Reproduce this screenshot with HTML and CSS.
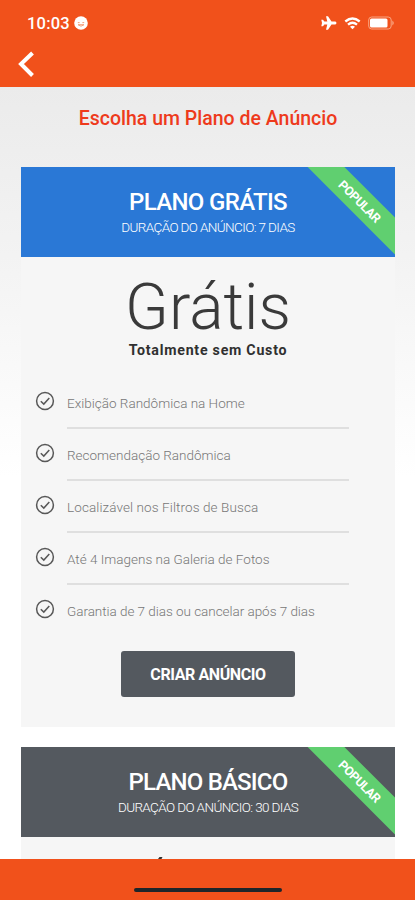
FILE: index.html
```html
<!DOCTYPE html>
<html lang="pt-BR">
<head>
<meta charset="utf-8">
<title>Escolha um Plano de Anúncio</title>
<link rel="stylesheet" href="styles.css">
</head>
<body>
<svg class="defs" width="0" height="0"><symbol id="check" viewBox="0 0 20 20"><circle cx="10" cy="10" r="8.4"/><path d="M5.8 10.2l3 2.9 5.5-6"/></symbol></svg>
<header class="topbar">
  <div class="status">
    <span class="time">10:03</span>
    <svg class="face" viewBox="0 0 14 14"><circle cx="7" cy="7" r="6.8" fill="#fff"/><path d="M3.8 6.6h1.8M8.4 6.6h1.8M4 8.7h6q-3 3-6 0z" fill="none" stroke="#f4a07c" stroke-width="1"/></svg>
    <div class="indicators">
      <svg width="16" height="14" viewBox="0 0 16 14"><path d="M15.500 7c0-.9-.8-1.500-1.800-1.500H10.500L7 .3H5l1.300 5.200H3.400L2 3.800H.3L1 7l-.7 3.200H2l1.400-1.700h2.900L5 13.700h2l3.500-5.200h3.200c1 0 1.800-.6 1.800-1.500z" fill="#fff"/></svg>
      <svg width="17" height="13" viewBox="0 0 17 13" fill="none" stroke="#fff" stroke-width="2.300"><path d="M1.300 4.500q7.200-6 14.400 0M4 7.700q4.500-3.800 9 0"/><path d="M8.500 12.300L6 9.800q2.500-1.900 5 0z" fill="#fff" stroke="none"/></svg>
      <svg width="27" height="14" viewBox="0 0 27 14"><rect x=".7" y="1" width="22.500" height="12" rx="3" fill="none" stroke="#f9a582"/><rect x="2" y="2.500" width="17.500" height="9" rx="1.500" fill="#fff"/><path d="M24.300 4.500q3 2.500 0 5z" fill="#f9a582"/></svg>
    </div>
  </div>
  <svg class="back" viewBox="0 0 18 28"><path d="M14.500 3L3 14l11.500 11.500" fill="none" stroke="#fff" stroke-width="4"/></svg>
</header>
<main class="content">
  <h1 class="heading">Escolha um Plano de Anúncio</h1>
  <section class="card">
    <div class="plan plan-blue">
      <h2>PLANO GRÁTIS</h2>
      <p class="duration">DURAÇÃO DO ANÚNCIO: 7 DIAS</p>
      <span class="ribbon">POPULAR</span>
    </div>
    <div class="price">Grátis</div>
    <p class="note">Totalmente sem Custo</p>
    <ul class="features">
      <li><svg><use href="#check"/></svg><span>Exibição Randômica na Home</span></li>
      <li><svg><use href="#check"/></svg><span>Recomendação Randômica</span></li>
      <li><svg><use href="#check"/></svg><span class="wide">Localizável nos Filtros de Busca</span></li>
      <li><svg><use href="#check"/></svg><span>Até 4 Imagens na Galeria de Fotos</span></li>
      <li><svg><use href="#check"/></svg><span class="tight">Garantia de 7 dias ou cancelar após 7 dias</span></li>
    </ul>
    <button class="create">CRIAR ANÚNCIO</button>
  </section>
  <section class="card card-next">
    <div class="plan plan-gray">
      <h2 class="basic">PLANO BÁSICO</h2>
      <p class="duration">DURAÇÃO DO ANÚNCIO: 30 DIAS</p>
      <span class="ribbon">POPULAR</span>
    </div>
    <svg class="peek" viewBox="0 0 6 3"><path d="M1 3l1.500-2h3L4.500 3z" fill="#333"/></svg>
  </section>
</main>
<footer class="bottombar"><div class="home"></div></footer>
</body>
</html>
```
FILE: styles.css
```css
* { box-sizing: border-box; margin: 0; padding: 0; }
body {
  width: 415px; height: 900px; overflow: hidden;
  display: flex; flex-direction: column;
  font-family: Roboto, "Liberation Sans", sans-serif;
  background: #fff;
}
.defs { display: block; position: absolute; }
.topbar { height: 86.500px; flex: none; background: #f1511b; padding: 13px 20px 0 18px; }
.status { display: flex; align-items: center; height: 20px; padding-left: 9px; }
.time { color: #fff; font-size: 16.500px; font-weight: 500; letter-spacing: .2px; width: 47px; white-space: nowrap; }
.face { width: 14px; height: 14px; }
.indicators { margin-left: auto; display: flex; align-items: center; gap: 7px; }
.back { display: block; width: 18px; height: 28px; margin-top: 17px; }
.content {
  flex: 1; min-height: 0; overflow: hidden; padding: 0 20px 0 21px;
  background: linear-gradient(#ebebeb 0, #f2f2f2 150px, #fff 390px);
}
.heading {
  height: 80.500px; padding-top: 20px; text-align: center; white-space: nowrap;
  font-size: 19.500px; line-height: 23px; font-weight: 500; color: #ee3a1c;
}
.card { height: 560px; background: #f6f6f6; text-align: center; }
.card-next { margin-top: 20px; }
.plan { height: 90px; position: relative; overflow: hidden; color: #fff; padding-top: 20px; white-space: nowrap; }
.plan-blue { background: #2a78d6; }
.plan-gray { background: #54595f; }
.plan h2 { font-size: 24px; line-height: 30px; font-weight: 500; letter-spacing: -.65px; }
.plan .basic { letter-spacing: -.8px; }
.duration { font-size: 13.500px; line-height: 20px; font-weight: 300; letter-spacing: -.62px; }
.ribbon {
  position: absolute; left: 274px; top: 21px; width: 130px; height: 26px;
  transform: rotate(45deg); background: #60cf70;
  font-size: 12.500px; font-weight: 700; line-height: 28px; text-align: center; letter-spacing: -.4px;
}
.price { font-size: 64px; line-height: 66px; font-weight: 300; color: #3a3a3a; margin-top: 18px; }
.note { font-size: 14.200px; line-height: 18px; font-weight: 700; color: #303030; letter-spacing: .75px; white-space: nowrap; }
.features { list-style: none; padding: 17.500px 46px 0 14px; }
.features li { display: flex; align-items: flex-start; height: 52.200px; padding-top: 14px; }
.features svg { width: 20px; height: 20px; flex: none; fill: none; stroke: #585858; stroke-width: 1.500; }
.features span {
  margin-left: 12px; flex: 1; height: 38.200px; padding-top: 4px; text-align: left; white-space: nowrap;
  font-size: 13.500px; line-height: 16px; font-weight: 300; color: #777; border-bottom: 2px solid #dfdfdf;
}
.features .wide { letter-spacing: .1px; }
.features .tight { letter-spacing: -.04px; }
.features li:last-child span { border-bottom: 0; }
.create {
  display: block; width: 174px; height: 46px; margin: 13.500px auto 0; padding-top: 2px; border: 0; border-radius: 3px;
  background: #54595f; color: #fff; font: 700 16px/44px Roboto, "Liberation Sans", sans-serif;
  letter-spacing: -.4px; white-space: nowrap;
}
.peek { display: block; width: 6px; height: 3px; margin: 19px 0 0 136px; }
.bottombar { height: 41px; flex: none; background: #f1511b; padding-top: 28.500px; }
.home { width: 148px; height: 4px; margin: 0 auto; border-radius: 2px; background: #1d252a; }
```
